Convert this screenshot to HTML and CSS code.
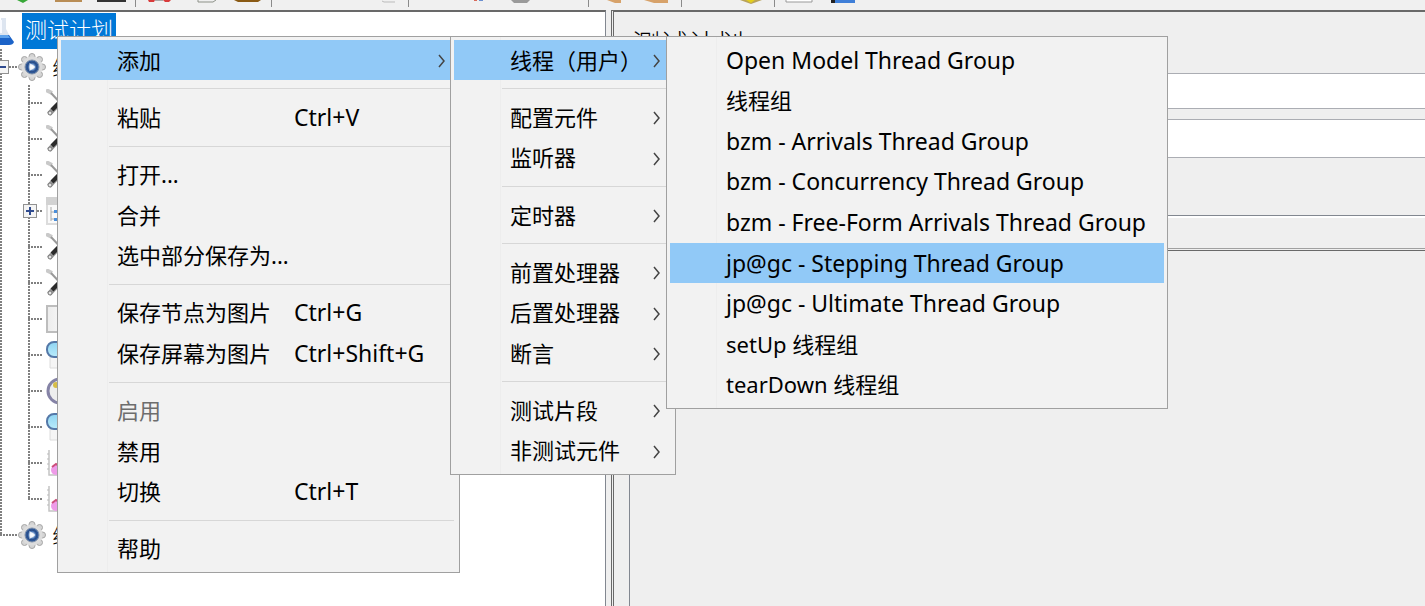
FILE: index.html
```
<!DOCTYPE html>
<html lang="zh-CN">
  <head>
    <meta charset="UTF-8" />
    <meta name="viewport" content="width=device-width, initial-scale=1.0" />
    <title>测试计划</title>
    <link rel="stylesheet" href="styles.css">
  </head>
  <body>
    <svg class="sprite" aria-hidden="true">
      <defs>
        <radialGradient id="hub">
          <stop offset="0" stop-color="#ffffff" />
          <stop offset="0.4" stop-color="#b9cbe4" />
          <stop offset="0.7" stop-color="#4a76b4" />
          <stop offset="1" stop-color="#1f3f78" />
        </radialGradient>
        <linearGradient id="lens" x1="0" y1="0" x2="0" y2="1">
          <stop offset="0" stop-color="#8fd4f2" />
          <stop offset="1" stop-color="#b9ecfb" />
        </linearGradient>
        <linearGradient id="sheet">
          <stop offset="0" stop-color="#ececec" />
          <stop offset="1" stop-color="#ffffff" />
        </linearGradient>
      </defs>
      <symbol id="gear" viewBox="0 0 28 28">
        <g fill="#d4d4d4" stroke="#a6a6a6" stroke-width="1">
          <circle cx="14" cy="3.5" r="3" /><circle cx="21.5" cy="6.5" r="3" />
          <circle cx="24.5" cy="14" r="3" /><circle cx="21.5" cy="21.5" r="3" />
          <circle cx="14" cy="24.5" r="3" /><circle cx="6.5" cy="21.5" r="3" />
          <circle cx="3.5" cy="14" r="3" /><circle cx="6.5" cy="6.5" r="3" />
        </g>
        <circle cx="14" cy="14" r="10.5" fill="#dcdcdc" />
        <circle cx="14" cy="14" r="7" fill="#2f5897" stroke="#8292aa" />
        <circle cx="14" cy="14" r="5" fill="url(#hub)" />
        <path d="M11.500 10v8l6-4z" fill="#fff" opacity="0.8" />
      </symbol>
      <symbol id="tools" viewBox="0 0 28 28">
        <path d="M0 1l6 3" fill="none" stroke="#c9c9c9" stroke-width="4" />
        <path d="M5 4l15 16" fill="none" stroke="#999" stroke-width="2" />
        <path d="M3 25L22 5" stroke="#999" stroke-width="5" />
        <path d="M6 21L17 10" stroke="#2b2b2b" stroke-width="4" />
        <circle cx="4" cy="24" r="2" fill="#e4e4e4" stroke="#777" />
      </symbol>
      <symbol id="window" viewBox="0 0 28 28">
        <rect x="1" y="1" width="26" height="26" fill="#fafafa" stroke="#dcdcdc" stroke-width="2" />
        <path d="M0 0h28v8H0z" fill="#d2d2d2" />
        <path d="M5 10v14M5 15h4M5 22h4" stroke="#aaa" fill="none" />
        <path d="M8 13h4v3H8zM8 21h4v3H8z" fill="#4b8fdb" />
      </symbol>
      <symbol id="page" viewBox="0 0 28 28">
        <rect x="1" y="1" width="26" height="26" fill="url(#sheet)" stroke="#bdbdbd" stroke-width="2" />
      </symbol>
      <symbol id="glass" viewBox="0 0 28 28">
        <path d="M4 14h20v13H4z" fill="#f5f5f5" stroke="#dcdcdc" />
        <rect x="1" y="1" width="22" height="15" rx="7" fill="url(#lens)" stroke="#5478a8" stroke-width="2" />
      </symbol>
      <symbol id="clock" viewBox="0 0 28 28">
        <circle cx="14" cy="14" r="12" fill="#eee" stroke="#8583a6" stroke-width="3" />
        <circle cx="10" cy="8" r="3" fill="#d6bd48" />
      </symbol>
      <symbol id="graph" viewBox="0 0 28 28">
        <path d="M3 1v25h25" fill="none" stroke="#c4c4c4" stroke-width="1.5" />
        <path d="M1 5h2M1 10h2M1 15h2M1 20h2" stroke="#bbb" />
        <circle cx="10" cy="21" r="5" fill="#ee9be8" />
        <path d="M6 18l4-3 4 3" stroke="#cc4e7a" stroke-width="2" fill="none" />
      </symbol>
      <symbol id="flask" viewBox="0 0 28 28">
        <path d="M15 1h5v11l7 13q0 2-3 2H6q-3 0-3-2l12-13z" fill="#dde5f0" />
        <path d="M15 3v13" stroke="#f8faff" stroke-width="2" />
        <path d="M8 18h15l5 7q-1 3-5 3H7q-4 0-5-3z" fill="#1b63c8" />
        <path d="M9 18h13l2 3H8z" fill="#5fa3ec" />
      </symbol>
      <symbol id="arrow" viewBox="0 0 8 14">
        <path d="M1 1l5 6-5 6" fill="none" stroke="#444" stroke-width="1.5" />
      </symbol>
    </svg>

    <div class="toolbar">
      <svg width="870" height="8" viewBox="0 0 870 8">
        <path d="M17 0h11l-5 3z" fill="#38a838" />
        <path d="M55 0h27v2H55z" fill="#b98d55" />
        <path d="M97 0h29v2H97z" fill="#333" />
        <path d="M148 0h7l-1 2h-5zM163 0h8l-2 2h-4z" fill="#d83b3b" />
        <path d="M155 0h8v1h-8z" fill="#aaa" />
        <path d="M198 0v2h15l3-2" fill="none" stroke="#8d9188" />
        <path d="M234 0h27l-3 2h-20z" fill="#8a5a14" />
        <path d="M382 1l2 1h11" fill="none" stroke="#bbb" />
        <path d="M474 0h3v1h-3z" fill="#d86a5a" />
        <path d="M479 0h4v1h-4z" fill="#6b8fd0" />
        <path d="M511 0h19l-3 3h-13z" fill="#9a9a9a" />
        <path d="M607 0h14v3h-6z" fill="#d7a26a" />
        <path d="M644 0h24v3h-14z" fill="#d7a26a" />
        <path d="M740 0h22l-11 4z" fill="#b9a35a" />
        <path d="M746 0h9l-4 3z" fill="#e4cf1c" />
        <path d="M786 0v2h26V0" fill="#fff" stroke="#999" />
        <path d="M831 0h8v3h-8z" fill="#222" />
        <path d="M835 0h20v3h-20z" fill="#3f7fd8" />
        <path d="M135.500 0v7M271.500 0v7M408.500 0v7M588.500 0v7M681.500 0v7M774.500 0v7" stroke="#8a8a8a" />
      </svg>
    </div>
    <div class="workspace">
      <nav class="tree-pane">
        <ul class="tree">
          <li>
            <div class="node root"><svg class="icon"><use href="#flask" /></svg><span class="name selected">测试计划</span></div>
            <ul class="groups">
              <li>
                <div class="node group"><button class="toggle minus" aria-label="折叠"></button><svg class="icon"><use href="#gear" /></svg><span class="name">线程组</span></div>
                <ul class="elements">
                  <li class="node"><svg class="icon"><use href="#tools" /></svg></li>
                  <li class="node"><svg class="icon"><use href="#tools" /></svg></li>
                  <li class="node"><svg class="icon"><use href="#tools" /></svg></li>
                  <li class="node"><button class="toggle" aria-label="展开"></button><svg class="icon"><use href="#window" /></svg></li>
                  <li class="node"><svg class="icon"><use href="#tools" /></svg></li>
                  <li class="node"><svg class="icon"><use href="#tools" /></svg></li>
                  <li class="node"><svg class="icon"><use href="#page" /></svg></li>
                  <li class="node"><svg class="icon"><use href="#glass" /></svg></li>
                  <li class="node"><svg class="icon"><use href="#clock" /></svg></li>
                  <li class="node"><svg class="icon"><use href="#glass" /></svg></li>
                  <li class="node"><svg class="icon"><use href="#graph" /></svg></li>
                  <li class="node"><svg class="icon"><use href="#graph" /></svg></li>
                </ul>
              </li>
              <li>
                <div class="node group"><svg class="icon"><use href="#gear" /></svg><span class="name">线程组</span></div>
              </li>
            </ul>
          </li>
        </ul>
      </nav>
      <main class="editor">
        <h1>测试计划</h1>
        <input class="field" type="text" aria-label="名称" />
        <input class="field comment" type="text" aria-label="注释" />
        <div class="variables"></div>
        <div class="table-area"></div>
      </main>
    </div>

    <div class="menu menu-main" role="menu">
      <button class="item active" role="menuitem"><span>添加</span><svg class="arrow"><use href="#arrow" /></svg></button>
      <hr>
      <button class="item" role="menuitem"><span>粘贴</span><kbd>Ctrl+V</kbd></button>
      <hr>
      <button class="item" role="menuitem"><span>打开...</span></button>
      <button class="item" role="menuitem"><span>合并</span></button>
      <button class="item" role="menuitem"><span>选中部分保存为...</span></button>
      <hr>
      <button class="item" role="menuitem"><span>保存节点为图片</span><kbd>Ctrl+G</kbd></button>
      <button class="item" role="menuitem"><span>保存屏幕为图片</span><kbd>Ctrl+Shift+G</kbd></button>
      <hr>
      <button class="item" role="menuitem" disabled><span>启用</span></button>
      <button class="item" role="menuitem"><span>禁用</span></button>
      <button class="item" role="menuitem"><span>切换</span><kbd>Ctrl+T</kbd></button>
      <hr>
      <button class="item" role="menuitem"><span>帮助</span></button>
    </div>

    <div class="menu menu-add" role="menu">
      <button class="item active" role="menuitem"><span>线程（用户）</span><svg class="arrow"><use href="#arrow" /></svg></button>
      <hr>
      <button class="item" role="menuitem"><span>配置元件</span><svg class="arrow"><use href="#arrow" /></svg></button>
      <button class="item" role="menuitem"><span>监听器</span><svg class="arrow"><use href="#arrow" /></svg></button>
      <hr>
      <button class="item" role="menuitem"><span>定时器</span><svg class="arrow"><use href="#arrow" /></svg></button>
      <hr>
      <button class="item" role="menuitem"><span>前置处理器</span><svg class="arrow"><use href="#arrow" /></svg></button>
      <button class="item" role="menuitem"><span>后置处理器</span><svg class="arrow"><use href="#arrow" /></svg></button>
      <button class="item" role="menuitem"><span>断言</span><svg class="arrow"><use href="#arrow" /></svg></button>
      <hr>
      <button class="item" role="menuitem"><span>测试片段</span><svg class="arrow"><use href="#arrow" /></svg></button>
      <button class="item" role="menuitem"><span>非测试元件</span><svg class="arrow"><use href="#arrow" /></svg></button>
    </div>

    <div class="menu menu-threads" role="menu">
      <button class="item" role="menuitem"><span class="latin">Open Model Thread Group</span></button>
      <button class="item" role="menuitem"><span>线程组</span></button>
      <button class="item" role="menuitem"><span class="latin">bzm - Arrivals Thread Group</span></button>
      <button class="item" role="menuitem"><span class="latin">bzm - Concurrency Thread Group</span></button>
      <button class="item" role="menuitem"><span class="latin">bzm - Free-Form Arrivals Thread Group</span></button>
      <button class="item active" role="menuitem"><span class="latin">jp@gc - Stepping Thread Group</span></button>
      <button class="item" role="menuitem"><span class="latin">jp@gc - Ultimate Thread Group</span></button>
      <button class="item" role="menuitem"><span>setUp 线程组</span></button>
      <button class="item" role="menuitem"><span>tearDown 线程组</span></button>
    </div>
  </body>
</html>
```
FILE: styles.css
```
* {
  box-sizing: border-box;
}
body {
  margin: 0;
  height: 100vh;
  overflow: hidden;
  display: flex;
  flex-direction: column;
  background: #efefef;
  color: #000;
  font-family: "Noto Sans", "Noto Sans CJK SC", sans-serif;
  font-size: 22px;
}
.sprite {
  position: absolute;
  width: 0;
  height: 0;
}
.toolbar {
  height: 10px;
  background: #f0f0f0;
}
.toolbar svg {
  display: block;
}
.workspace {
  flex: 1;
  display: flex;
  gap: 5px;
  min-height: 0;
}

/* tree */
.tree-pane {
  flex: 0 0 606px;
  overflow: hidden;
  background: #fff;
  border-top: 2px solid #696969;
  border-right: 1px solid #828790;
}
.tree, .tree ul {
  list-style: none;
  margin: 0;
  padding: 0;
}
.tree {
  padding-top: 1px;
}
.node {
  position: relative;
  display: flex;
  align-items: center;
  height: 36px;
}
.icon {
  flex: none;
  width: 28px;
  height: 28px;
}
.root .icon {
  margin-left: -14px;
}
.name {
  margin-left: 6px;
  line-height: 36px;
  font-weight: 300;
  white-space: nowrap;
}
.selected {
  margin-left: 8px;
  padding: 0 3px;
  background: #0078d7;
  color: #fff;
  line-height: 33px;
  padding-bottom: 3px;
}
.group {
  padding-left: 18px;
}
.groups {
  background: repeating-linear-gradient(#808080 0 2px, #fff 2px 3px) 0 0 / 2px calc(100% - 18px) no-repeat;
}
.group::before {
  content: "";
  position: absolute;
  left: 0;
  width: 18px;
  height: 2px;
  background: repeating-linear-gradient(90deg, #808080 0 2px, #fff 2px 3px);
}
.elements {
  background: repeating-linear-gradient(#808080 0 2px, #fff 2px 3px) 28px 0 / 2px calc(100% - 18px) no-repeat;
}
.elements .node {
  padding-left: 46px;
}
.elements .node::before {
  content: "";
  position: absolute;
  left: 28px;
  width: 15px;
  height: 2px;
  background: repeating-linear-gradient(90deg, #808080 0 2px, #fff 2px 3px);
}
.toggle {
  position: absolute;
  left: 23px;
  width: 14px;
  height: 14px;
  padding: 0;
  border: 1px solid #919191;
  background:
    linear-gradient(#2f4b8f, #2f4b8f) center / 8px 2px no-repeat,
    linear-gradient(#2f4b8f, #2f4b8f) center / 2px 8px no-repeat,
    #f4f4f4;
}
.minus {
  left: -5px;
  background: linear-gradient(#2f4b8f, #2f4b8f) center / 8px 2px no-repeat, #f4f4f4;
}

/* editor */
.editor {
  flex: 1;
  display: flex;
  flex-direction: column;
  border-top: 2px solid #696969;
  border-left: 3px double #696969;
}
.editor h1 {
  margin: 12px 0 9px 18px;
  font-size: 28px;
  line-height: 40px;
  font-weight: 300;
}
.field {
  height: 36px;
  margin: 0 0 10px 120px;
  border: 1px solid #abadb3;
  border-right: 0;
  background: #fff;
  font: inherit;
}
.comment {
  height: 39px;
}
.variables {
  height: 34px;
  margin-top: 47px;
  border-top: 1px solid #828790;
  border-bottom: 1px solid #a0a0a0;
  box-shadow: inset 0 2px #fff;
}
.table-area {
  flex: 1;
  margin: 1px 0 0 15px;
  border-top: 1px solid #696969;
  border-left: 1px solid #828790;
}

/* popup menus */
.menu {
  position: absolute;
  top: 36px;
  display: flex;
  flex-direction: column;
  padding: 3px;
  border: 1px solid #a0a0a0;
  background: linear-gradient(#ededed, #ededed) 49px 0 / 1px 100% no-repeat, #f2f2f2;
}
.menu-main {
  left: 57px;
  width: 403px;
  min-height: 537px;
}
.menu-add {
  left: 450px;
  width: 226px;
  min-height: 439px;
}
.menu-threads {
  left: 666px;
  width: 502px;
  min-height: 373px;
}
.item {
  flex: 1 0 40px;
  display: grid;
  grid-template-columns: 177px 1fr;
  align-items: center;
  padding: 0 10px 1px 56px;
  border: 0;
  background: none;
  color: #000;
  font: inherit;
  line-height: 30px;
  text-align: left;
  white-space: nowrap;
}
.item.active {
  background: #91c9f7;
}
.item:disabled {
  color: #6d6d6d;
}
.item kbd {
  font: inherit;
  font-size: 23px;
}
.latin {
  font-size: 23px;
}
.arrow {
  width: 8px;
  height: 14px;
  margin-top: 3px;
  justify-self: end;
}
.menu-add .item {
  grid-template-columns: 1fr 8px;
  padding-right: 11px;
}
.menu hr {
  width: auto;
  margin: 8px 2px 8px 48px;
  border: 0;
  border-top: 1px solid #d7d7d7;
}
```
